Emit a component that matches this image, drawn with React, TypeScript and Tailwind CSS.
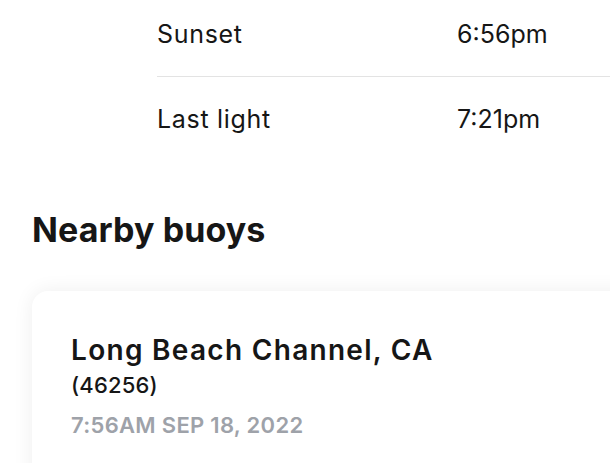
import React from "react";

const rows = [
  { label: "Sunset", value: "6:56pm", border: true },
  { label: "Last light", value: "7:21pm", border: false },
];

export default function App() {
  return (
    <div
      className="w-[610px] h-[463px] overflow-hidden bg-white text-[#161616]"
      style={{ fontFamily: "Inter, 'Liberation Sans', sans-serif" }}
    >
      <div className="mt-[-8px] ml-[157px]">
        {rows.map((r) => (
          <div
            key={r.label}
            className={`flex py-[27px] text-[25px] leading-[30px] ${r.border ? "border-b border-[#e3e3e3]" : ""}`}
          >
            <div className="w-[300px] tracking-[0.7px]">{r.label}</div>
            <div>{r.value}</div>
          </div>
        ))}
      </div>

      <h2 className="mt-[49px] ml-[32px] text-[34px] leading-[40px] font-bold tracking-[0.1px]">
        Nearby buoys
      </h2>

      <div className="mt-[41px] ml-[32px] w-[620px] h-[300px] rounded-2xl bg-white shadow-[0_0_20px_rgba(0,0,0,0.07)] pt-[42px] pl-[39px]">
        <div className="text-[28px] leading-[34px] font-semibold tracking-[1.3px]">
          Long Beach Channel, CA
        </div>
        <div className="mt-[4px] text-[22px] leading-[28px] font-medium tracking-[0.2px]">
          (46256)
        </div>
        <div className="mt-[14px] text-[22px] leading-[24px] font-semibold tracking-[0.3px] text-[#9ea2a9]">
          7:56AM SEP 18, 2022
        </div>
      </div>
    </div>
  );
}
